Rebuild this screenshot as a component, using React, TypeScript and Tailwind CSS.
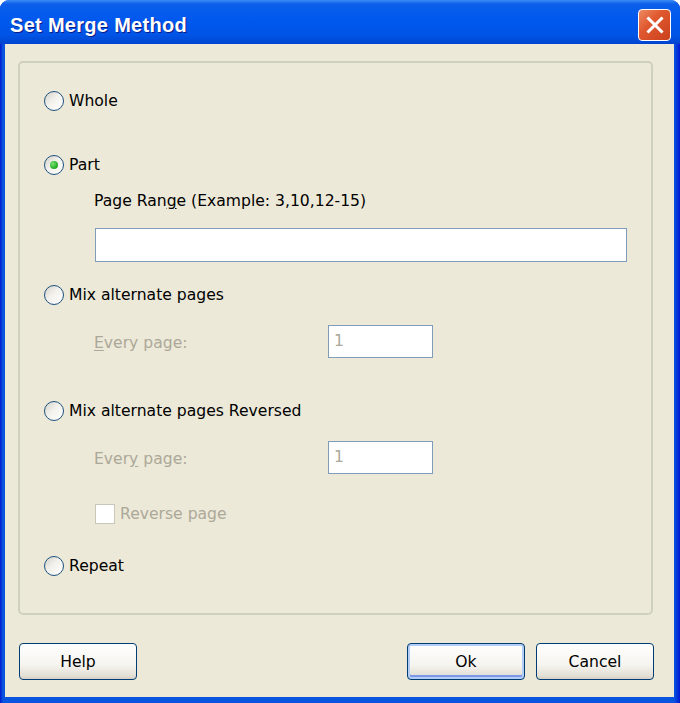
import React from 'react';

const font = { fontFamily: '"DejaVu Sans", Verdana, sans-serif' };

function Radio({ checked }: { checked?: boolean }) {
  return (
    <span className="relative flex h-[20px] w-[20px] shrink-0 items-center justify-center rounded-full border border-[#1c5180] bg-[linear-gradient(135deg,#d4d1c8_0%,#f2f1ec_45%,#ffffff_100%)]">
      {checked && (
        <span className="h-[8px] w-[8px] rounded-full bg-[radial-gradient(circle_at_35%_35%,#7de07a_0%,#2fb52d_55%,#1a8f1a_100%)]" />
      )}
    </span>
  );
}

function RadioRow({ label, checked, className }: { label: string; checked?: boolean; className?: string }) {
  return (
    <div className={`flex h-[24px] items-center gap-[5px] pl-[24px] text-[15.6px] text-black ${className ?? ''}`}>
      <Radio checked={checked} />
      <span className="pt-[2px]">{label}</span>
    </div>
  );
}

function EveryPage({ className, accel }: { className?: string; accel: 'E' | 'y' }) {
  return (
    <div className={`flex h-[33px] items-center pl-[74px] ${className ?? ''}`}>
      <span className="w-[234px] pt-[4px] text-[15.6px] text-[#aca899]">
        {accel === 'E' ? (
          <>
            <span className="underline underline-offset-2">E</span>very page:
          </>
        ) : (
          <>
            Ever<span className="underline underline-offset-2">y</span> page:
          </>
        )}
      </span>
      <div className="flex h-[33px] w-[105px] items-center border border-[#7f9db9] bg-white pl-[5px] text-[15.6px] text-[#aca899]">
        1
      </div>
    </div>
  );
}

function Button({ label, isDefault, className }: { label: string; isDefault?: boolean; className?: string }) {
  return (
    <div
      className={`flex h-[37px] w-[118px] items-center justify-center rounded-[4px] border border-[#003c74] bg-[linear-gradient(180deg,#ffffff_0%,#f5f4ef_60%,#e3e0d6_90%,#d6d0c5_100%)] pt-[2px] text-[15.6px] text-black ${
        isDefault ? 'shadow-[inset_0_0_0_2px_#b4cdf5,inset_0_-2px_0_2px_#7a97e8]' : ''
      } ${className ?? ''}`}
    >
      {label}
    </div>
  );
}

export default function App() {
  return (
    <div className="h-[703px] w-[680px] bg-white" style={font}>
      <div className="flex h-full flex-col overflow-hidden rounded-t-[9px] bg-[linear-gradient(90deg,#0019cf_0px,#0a55e0_3px,#0a55e0_674px,#0019cf_680px)]">
        {/* Title bar */}
        <div className="flex h-[44px] shrink-0 items-start justify-between bg-[linear-gradient(180deg,#3d8cf8_0%,#0b5fe9_9%,#0058ee_45%,#0054e6_80%,#0044cf_100%)] pl-[10px] pr-[9px] pt-[9px]">
          <span
            className="mt-[2px] text-[20px] font-bold leading-[28px] tracking-[0.3px] text-white [text-shadow:1px_1px_0_#0a1c85]"
            style={{ fontFamily: '"Liberation Sans", Arial, sans-serif' }}
          >
            Set Merge Method
          </span>
          <div className="flex h-[32px] w-[33px] items-center justify-center rounded-[4px] border border-white bg-[linear-gradient(135deg,#ec8a63_0%,#e0582f_40%,#c9401c_100%)]">
            <svg width="20" height="20" viewBox="0 0 20 20">
              <path d="M3.5 3.5 L16.5 16.5 M16.5 3.5 L3.5 16.5" stroke="white" strokeWidth="3" strokeLinecap="square" />
            </svg>
          </div>
        </div>

        {/* Body */}
        <div className="mb-[6px] ml-[5px] mr-[6px] flex flex-1 flex-col bg-[#ece9d8]">
          <div className="ml-[13px] mt-[17px] h-[554px] w-[635px] rounded-[5px] border-2 border-[#d0d0bf]">
            <RadioRow label="Whole" className="mt-[26px]" />
            <RadioRow label="Part" checked className="mt-[40px]" />
            <div className="mt-[14px] h-[20px] pl-[74px] text-[15.6px] leading-[20px] text-black">
              Page Ran<span className="underline underline-offset-2">g</span>e (Example: 3,10,12-15)
            </div>
            <div className="ml-[75px] mt-[17px] h-[34px] w-[532px] border border-[#7f9db9] bg-white" />
            <RadioRow label="Mix alternate pages" className="mt-[21px]" />
            <EveryPage accel="E" className="mt-[18px]" />
            <RadioRow label="Mix alternate pages Reversed" className="mt-[41px]" />
            <EveryPage accel="y" className="mt-[18px]" />
            <div className="mt-[29px] flex h-[21px] items-center gap-[5px] pl-[75px] text-[15.6px] text-[#aca899]">
              <span className="h-[20px] w-[20px] border border-[#c9c7ba] bg-white" />
              <span className="pt-[3px]">Reverse page</span>
            </div>
            <RadioRow label="Repeat" className="mt-[30px]" />
          </div>

          <div className="mt-[28px] flex items-center pl-[14px]">
            <Button label="Help" />
            <Button label="Ok" isDefault className="ml-[270px]" />
            <Button label="Cancel" className="ml-[11px]" />
          </div>
        </div>
      </div>
    </div>
  );
}
